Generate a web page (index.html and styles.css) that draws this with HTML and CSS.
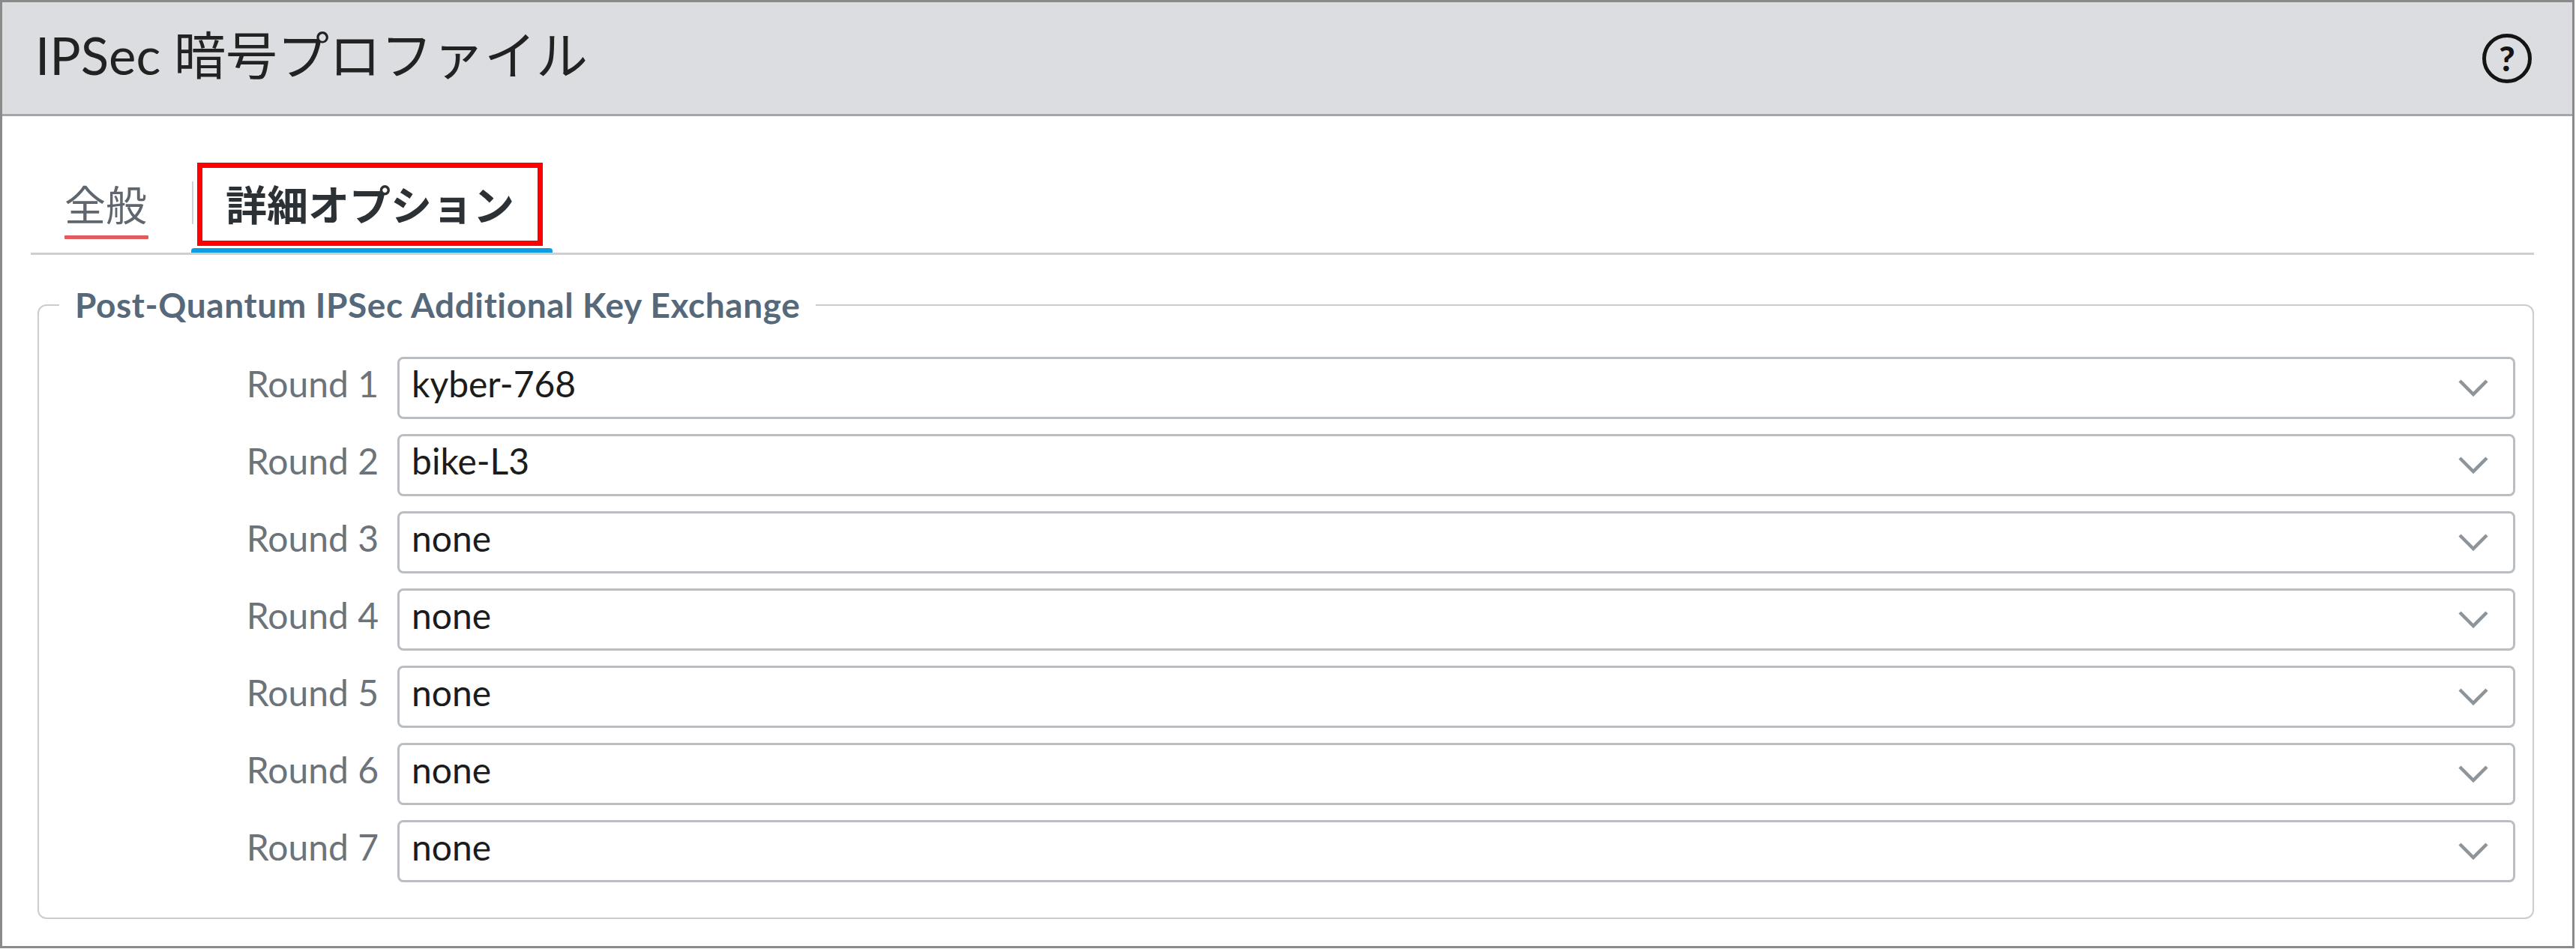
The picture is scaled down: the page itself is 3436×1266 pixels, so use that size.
FILE: index.html
```html
<!DOCTYPE html>
<html lang="ja">
<head>
<meta charset="utf-8">
<title>IPSec 暗号プロファイル</title>
<link rel="stylesheet" href="styles.css">
</head>
<body>
<div class="dialog">
  <header class="dlg-header">
    <h1 class="dlg-title">IPSec 暗号プロファイル</h1>
    <span class="help" title="Help">?</span>
  </header>

  <nav class="tabs">
    <div class="tab tab-general">
      <span class="tab-label">全般</span>
      <span class="err-line"></span>
    </div>
    <div class="tab tab-active">
      <span class="tab-label">詳細オプション</span>
      <span class="highlight"></span>
    </div>
  </nav>

  <fieldset class="group">
    <legend class="group-title">Post-Quantum IPSec Additional Key Exchange</legend>
    <div class="rows">
      <label class="row-label">Round 1</label>
      <div class="combo"><span class="combo-value">kyber-768</span><span class="combo-trigger"><svg class="chev" viewBox="0 0 40 23" width="40" height="23"><polyline points="2,2 20,20 38,2"/></svg></span></div>

      <label class="row-label">Round 2</label>
      <div class="combo"><span class="combo-value">bike-L3</span><span class="combo-trigger"><svg class="chev" viewBox="0 0 40 23" width="40" height="23"><polyline points="2,2 20,20 38,2"/></svg></span></div>

      <label class="row-label">Round 3</label>
      <div class="combo"><span class="combo-value">none</span><span class="combo-trigger"><svg class="chev" viewBox="0 0 40 23" width="40" height="23"><polyline points="2,2 20,20 38,2"/></svg></span></div>

      <label class="row-label">Round 4</label>
      <div class="combo"><span class="combo-value">none</span><span class="combo-trigger"><svg class="chev" viewBox="0 0 40 23" width="40" height="23"><polyline points="2,2 20,20 38,2"/></svg></span></div>

      <label class="row-label">Round 5</label>
      <div class="combo"><span class="combo-value">none</span><span class="combo-trigger"><svg class="chev" viewBox="0 0 40 23" width="40" height="23"><polyline points="2,2 20,20 38,2"/></svg></span></div>

      <label class="row-label">Round 6</label>
      <div class="combo"><span class="combo-value">none</span><span class="combo-trigger"><svg class="chev" viewBox="0 0 40 23" width="40" height="23"><polyline points="2,2 20,20 38,2"/></svg></span></div>

      <label class="row-label">Round 7</label>
      <div class="combo"><span class="combo-value">none</span><span class="combo-trigger"><svg class="chev" viewBox="0 0 40 23" width="40" height="23"><polyline points="2,2 20,20 38,2"/></svg></span></div>
    </div>
  </fieldset>
</div>
</body>
</html>
```

FILE: styles.css
```css
* { box-sizing: border-box; }

html, body {
  margin: 0;
  padding: 0;
  background: #ffffff;
}

body {
  width: 3436px;
  height: 1266px;
  overflow: hidden;
  font-family: Lato, "Noto Sans CJK JP", sans-serif;
  color: #222222;
}

.dialog {
  width: 3434px;
  height: 1265px;
  border: 3px solid #8a8a8a;
  background: #ffffff;
  display: flex;
  flex-direction: column;
}

/* header */
.dlg-header {
  height: 152px;
  flex: none;
  background: #dcdde0;
  border-bottom: 3px solid #a2a7ac;
  display: flex;
  align-items: center;
  justify-content: space-between;
  padding: 0 54px 9px 44px;
}

.dlg-title {
  margin: 0;
  font-family: Lato, "Noto Sans CJK JP", sans-serif;
  font-weight: 400;
  font-size: 69px;
  line-height: 1;
  color: #222222;
}

.help {
  width: 66px;
  height: 66px;
  margin-top: 10px;
  border: 5px solid #141414;
  border-radius: 50%;
  display: flex;
  align-items: center;
  justify-content: center;
  font-family: Lato, "DejaVu Sans", sans-serif;
  font-weight: 900;
  font-size: 46px;
  line-height: 1;
  color: #141414;
}

/* tabs */
.tabs {
  flex: none;
  display: flex;
  align-items: flex-end;
  margin: 0 51px 0 38px;
  padding-top: 88px;
  border-bottom: 3px solid #cdcfd1;
}

.tab {
  display: flex;
  flex-direction: column;
  align-items: flex-start;
}

.tab-label {
  display: block;
  font-family: "Noto Sans CJK JP", sans-serif;
  font-size: 55px;
  line-height: 55px;
  white-space: nowrap;
}

.tab-general {
  padding: 0 57px 18px 45px;
}

.tab-general .tab-label {
  color: #5f666d;
  font-weight: 400;
}

.err-line {
  display: block;
  width: 112px;
  height: 5px;
  margin-top: 16px;
  background: #e25b5d;
  border-radius: 1px;
}

.tab-active {
  position: relative;
  padding: 0 51px 39px 46px;
}

.tab-active .tab-label {
  color: #2c3136;
  font-weight: 700;
}

.tab-active::before {
  content: "";
  position: absolute;
  left: 1px;
  top: -1px;
  width: 2px;
  height: 57px;
  background: #cbd3da;
}

.tab-active::after {
  content: "";
  position: absolute;
  left: 0;
  right: 0;
  bottom: 0;
  height: 6px;
  background: #0d9de0;
  border-radius: 4px 4px 0 0;
}

.highlight {
  position: absolute;
  left: 8px;
  top: -26px;
  width: 461px;
  height: 111px;
  border: 7px solid #ff0000;
}

/* group */
.group {
  margin: 40px 51px 0 47px;
  padding: 42px 23px 47px 0;
  border: 2px solid #c9cdd1;
  border-radius: 12px;
  min-width: 0;
}

.group-title {
  margin-left: 27px;
  padding: 0 21px;
  font-family: Lato, sans-serif;
  font-weight: 700;
  font-size: 46px;
  line-height: 54px;
  letter-spacing: 0.6px;
  color: #56697a;
}

.rows {
  display: grid;
  grid-template-columns: 453px 1fr;
  grid-auto-rows: 83px;
  column-gap: 25px;
  row-gap: 20px;
}

.row-label {
  display: flex;
  align-items: center;
  justify-content: flex-end;
  padding-bottom: 12px;
  font-size: 48px;
  line-height: 58px;
  color: #6c7379;
  white-space: nowrap;
}

.combo {
  display: flex;
  align-items: stretch;
  border: 3px solid #babec2;
  border-radius: 8px;
  background: #ffffff;
}

.combo-value {
  flex: 1;
  display: flex;
  align-items: center;
  padding: 0 0 12px 16px;
  font-size: 48px;
  line-height: 58px;
  color: #1c1c1c;
}

.combo-trigger {
  flex: none;
  width: 84px;
  display: flex;
  align-items: center;
  padding-left: 11px;
}

.chev polyline {
  fill: none;
  stroke: #8d959b;
  stroke-width: 4.5;
}
```
